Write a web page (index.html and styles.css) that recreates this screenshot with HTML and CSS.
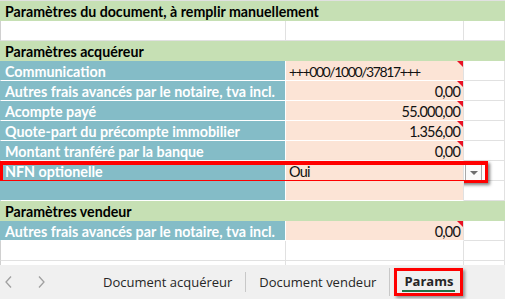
FILE: index.html
```html
<!DOCTYPE html>
<html>
<head>
  <title>Params</title>
  <link rel="stylesheet" href="styles.css">
</head>
<body>

  <div class="sheet">
    <div class="row green">
      <div class="cell wide bold">Paramètres du document, à remplir manuellement</div>
      <div class="cell"></div>
    </div>
    <div class="row">
      <div class="cell"></div><div class="cell"></div><div class="cell"></div>
    </div>
    <div class="row green">
      <div class="cell wide bold">Paramètres acquéreur</div>
      <div class="cell"></div>
    </div>
    <div class="row">
      <div class="cell label">Communication</div>
      <div class="cell value code note">+++000/1000/37817+++</div>
      <div class="cell"></div>
    </div>
    <div class="row">
      <div class="cell label">Autres frais avancés par le notaire, tva incl.</div>
      <div class="cell value num note">0,00</div>
      <div class="cell"></div>
    </div>
    <div class="row">
      <div class="cell label">Acompte payé</div>
      <div class="cell value num note">55.000,00</div>
      <div class="cell"></div>
    </div>
    <div class="row">
      <div class="cell label">Quote-part du précompte immobilier</div>
      <div class="cell value num note">1.356,00</div>
      <div class="cell"></div>
    </div>
    <div class="row">
      <div class="cell label">Montant tranféré par la banque</div>
      <div class="cell value num note">0,00</div>
      <div class="cell"></div>
    </div>
    <div class="row highlight">
      <div class="cell label">NFN optionelle</div>
      <div class="cell value">Oui</div>
      <div class="cell"></div>
      <div class="dropdown"><span class="caret"></span></div>
      <div class="redbox"></div>
    </div>
    <div class="row">
      <div class="cell label"></div>
      <div class="cell value"></div>
      <div class="cell"></div>
    </div>
    <div class="row green">
      <div class="cell wide bold">Paramètres vendeur</div>
      <div class="cell"></div>
    </div>
    <div class="row">
      <div class="cell label">Autres frais avancés par le notaire, tva incl.</div>
      <div class="cell value num note">0,00</div>
      <div class="cell"></div>
    </div>
    <div class="row">
      <div class="cell"></div><div class="cell"></div><div class="cell"></div>
    </div>
    <div class="row">
      <div class="cell"></div><div class="cell"></div><div class="cell"></div>
    </div>
  </div>

  <div class="tabbar">
    <div class="arrows">
      <svg width="10" height="14" viewBox="0 0 10 14"><path d="M7 1.5 L2 7 L7 12.5" fill="none" stroke="#a0a0a0" stroke-width="1.3"/></svg>
      <svg width="10" height="14" viewBox="0 0 10 14"><path d="M3 1.5 L8 7 L3 12.5" fill="none" stroke="#a0a0a0" stroke-width="1.3"/></svg>
    </div>
    <div class="tab">Document acquéreur</div>
    <div class="tab sep">Document vendeur</div>
    <div class="tab sep active"><span>Params</span></div>
  </div>

</body>
</html>
```

FILE: styles.css
```css
html, body {
  margin: 0;
  padding: 0;
  background: #fff;
}
body {
  width: 505px;
  height: 299px;
  overflow: hidden;
  font-family: Lato, "Liberation Sans", sans-serif;
  font-size: 14.2px;
  color: #000;
}
.sheet {
  height: 265px;
  overflow: hidden;
  border-top: 1px solid #e1e1e1;
  box-sizing: border-box;
}
.row {
  display: grid;
  grid-template-columns: 286px 178px 1fr;
  height: 20px;
  position: relative;
}
.cell {
  box-sizing: border-box;
  border-right: 1px solid #e1e1e1;
  border-bottom: 1px solid #e1e1e1;
  line-height: 19px;
  padding: 1px 0 0 5px;
  white-space: nowrap;
  overflow: hidden;
  position: relative;
}
.cell:first-child {
  border-left: 1px solid #d0d0d0;
  padding-left: 4px;
}
.wide {
  grid-column: span 2;
  overflow: visible;
}
.bold {
  font-weight: bold;
}
.green .cell {
  background: #c6e0b4;
  border-color: #c6e0b4;
  border-bottom-color: #fff;
}
.label {
  background: #84bcc7;
  color: #fff;
  font-weight: bold;
  font-size: 14.3px;
  border-right-color: #fff !important;
  border-bottom-color: #fff;
}
.cell.label:first-child {
  border-left-color: #84bcc7;
}
.value {
  background: #fce4d6;
  border-bottom-color: #fff;
  padding-left: 3px;
  font-size: 14.5px;
  letter-spacing: -0.8px;
  color: #111;
}
.code {
  font-size: 14px;
  letter-spacing: -1.4px;
}
.num {
  text-align: right;
  padding-right: 3px;
}
.note::after {
  content: "";
  position: absolute;
  top: 0;
  right: 0;
  border-top: 6px solid #e81123;
  border-left: 6px solid transparent;
}
.dropdown {
  position: absolute;
  left: 465px;
  top: 3px;
  width: 15px;
  height: 15px;
  background: #fafafa;
  border: 1px solid #a8a8a8;
}
.caret {
  position: absolute;
  left: 4px;
  top: 6px;
  border-top: 4px solid #6d6d6d;
  border-left: 4px solid transparent;
  border-right: 4px solid transparent;
}
.redbox {
  position: absolute;
  left: 0;
  top: 0;
  width: 488px;
  height: 22px;
  box-sizing: border-box;
  border: 3px solid #ff0000;
  border-top-width: 4px;
  box-shadow: 2px 2px 3px rgba(0, 0, 0, 0.5);
}
.tabbar {
  height: 34px;
  background: #f0f0f0;
  display: flex;
  align-items: center;
  font-family: "Open Sans", "Liberation Sans", sans-serif;
  font-size: 13px;
  color: #262626;
}
.arrows {
  display: flex;
  gap: 22px;
  padding-left: 4px;
  width: 86px;
}
.tab {
  padding: 0 13px;
  position: relative;
  line-height: 20px;
}
.sep {
  border-left: 1px solid #c8c8c8;
}
.active {
  font-weight: bold;
  padding: 0 4px;
  border-left: 1px solid #c8c8c8;
}
.active span {
  display: block;
  position: relative;
  border: 3px solid #ff0000;
  padding: 1px 7px 3px;
  line-height: 18px;
  box-shadow: 2px 2px 3px rgba(0, 0, 0, 0.4);
}
.active span::after {
  content: "";
  position: absolute;
  left: 5px;
  right: 5px;
  bottom: 1px;
  height: 2px;
  background: #217346;
}
```
